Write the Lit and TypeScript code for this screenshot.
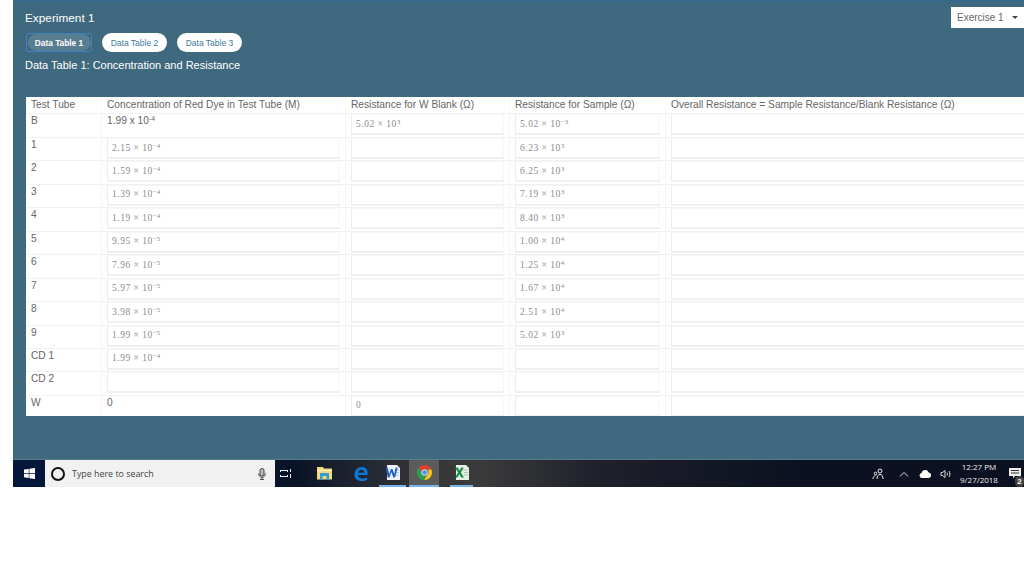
import { LitElement, html, css } from "lit";
import { customElement } from "lit/decorators.js";

type V = [string, string] | null;
const rows: { name: string; conc: V | string; blank: V | string; sample: V }[] = [
  { name: "B", conc: "b", blank: ["5.02", "3"], sample: ["5.02", "−3"] },
  { name: "1", conc: ["2.15", "−4"], blank: null, sample: ["6.23", "3"] },
  { name: "2", conc: ["1.59", "−4"], blank: null, sample: ["6.25", "3"] },
  { name: "3", conc: ["1.39", "−4"], blank: null, sample: ["7.19", "3"] },
  { name: "4", conc: ["1.19", "−4"], blank: null, sample: ["8.40", "3"] },
  { name: "5", conc: ["9.95", "−5"], blank: null, sample: ["1.00", "4"] },
  { name: "6", conc: ["7.96", "−5"], blank: null, sample: ["1.25", "4"] },
  { name: "7", conc: ["5.97", "−5"], blank: null, sample: ["1.67", "4"] },
  { name: "8", conc: ["3.98", "−5"], blank: null, sample: ["2.51", "4"] },
  { name: "9", conc: ["1.99", "−5"], blank: null, sample: ["5.02", "3"] },
  { name: "CD 1", conc: ["1.99", "−4"], blank: null, sample: null },
  { name: "CD 2", conc: null, blank: null, sample: null },
  { name: "W", conc: "w", blank: "0", sample: null },
];

@customElement("app-root")
export class AppRoot extends LitElement {
  static styles = css`
    :host { display: block; width: 1024px; height: 576px; background: #fff; overflow: hidden; font-family: "Liberation Sans", Arial, sans-serif; }
    .panel { margin-left: 13px; height: 460px; box-sizing: border-box; background: #3f697e; border-top: 2px solid #38698a; padding: 5px 0 0 12px; color: #fff; overflow: hidden; border-bottom: 1px solid #5d7d8d; }
    .head { display: flex; justify-content: space-between; align-items: center; height: 21px; }
    .title { font-size: 11.8px; }
    .ex { width: 73px; height: 21px; box-sizing: border-box; background: #fff; color: #666; font-size: 10px; display: flex; align-items: center; padding-left: 6px; gap: 8px; }
    .caret { width: 0; height: 0; border-style: solid; border-color: #444 transparent transparent; border-width: 3px 3.5px 0; }
    .pills { display: flex; margin: 5px 0 0 1px; height: 19px; }
    .pill { height: 19px; box-sizing: border-box; border-radius: 10px; background: #fff; color: #3d7a9c; font-size: 8.5px; display: flex; align-items: center; justify-content: center; width: 65px; margin-right: 10px; }
    .pill.on { width: 66px; border-radius: 2px; border: 1px solid #3f7fc4; background: #3f697e; }
    .pill.on span { display: flex; align-items: center; justify-content: center; width: 63px; height: 17px; border-radius: 9px; background: #587e90; color: #fff; font-weight: bold; font-size: 8.3px; }
    .sub { font-size: 11px; line-height: 14px; margin-top: 6px; }
    .wrap { margin: 25px 0 0 1px; height: 319px; overflow: hidden; background: #fff; box-sizing: border-box; }
    .grid { display: grid; width: 1000px; grid-template-columns: 76px 244px 164px 156px 360px; grid-template-rows: 16px 24px repeat(11, 23.45px) 24px; color: #666; font-size: 10.2px; }
    .th { padding: 1px 0 0 5px; line-height: 13px; white-space: nowrap; color: #666; border-right: 1px solid #f9f9f9; box-sizing: border-box; font-size: 10.2px; }
    .td { border-top: 1px solid #f1f1f1; border-right: 1px solid #f6f6f6; box-sizing: border-box; padding: 0 5px; line-height: 12px; min-width: 0; overflow: hidden; }
    .td.n { color: #666; padding-top: 1px; }
    .td.last { padding-right: 0; }
    .plain { color: #666; font-size: 10.2px; padding-top: 1px; }
    .plain sup { font-size: 7px; vertical-align: 3px; line-height: 0; }
    .input { height: 21px; box-sizing: border-box; border-top: 1px solid #f6f6f6; border-bottom: 2px solid #f0f0f0; border-left: 1px solid #ececec; border-right: 1px solid #f6f6f6; padding: 0 0 1px 4px; font-family: "Liberation Serif", serif; font-size: 9.5px; color: #8c8c8c; display: flex; align-items: center; letter-spacing: .5px; white-space: pre; }
    .input sup { font-size: 7px; vertical-align: 3px; line-height: 0; letter-spacing: 0; }
    .bar { margin-left: 13px; height: 27px; display: flex; align-items: stretch; background: linear-gradient(90deg, #0a1428 0%, #0a1428 28%, #333436 40%, #3b3b3b 46%, #1e202a 58%, #0b1120 78%, #0b1120 100%); color: #fff; }
    .start { width: 32px; background: #04163a; display: flex; align-items: center; justify-content: center; }
    .search { width: 230px; background: #f1f1f1; display: flex; align-items: center; padding-left: 6px; box-sizing: border-box; color: #444; font-family: "Open Sans", "Liberation Sans", sans-serif; font-size: 8.900px; }
    .ring { width: 10px; height: 10px; border: 2px solid #111; border-radius: 50%; margin-right: 7px; flex: none; }
    .txt { flex: 1; }
    .search svg { margin-right: 9px; }
    .cell { display: flex; align-items: center; justify-content: center; box-sizing: border-box; flex: none; }
    .act { border-bottom: 2px solid #75b4ea; }
    .chrome { background: #5b5b5b; margin-right: 11px; }
    .word { margin-right: 3px; }
    .tv { margin-right: 8px; }
    .gap5 { margin-right: 5px; }
    .w18 { width: 18px; } .w20 { width: 20px; } .w22 { width: 22px; } .w23 { width: 23px; } .w27 { width: 27px; } .w30 { width: 30px; } .w36 { width: 36px; } .w38 { width: 38px; }
    .spacer { flex: 1; }
    .clock { width: 42px; font-size: 8px; line-height: 13px; text-align: center; color: #eee; font-family: "Open Sans", "Liberation Sans", sans-serif; margin: 0 6px 0 2px; }
    .notif { position: relative; }
    .badge { position: absolute; right: 0; bottom: 0; width: 9px; height: 11px; border-radius: 5px; background: #444; color: #fff; font-size: 8px; font-weight: bold; line-height: 11px; text-align: center; }
  `;

  val(v: V | string) {
    if (v === null) return html`<div class="input"></div>`;
    if (typeof v === "string") return html`<div class="input">${v}</div>`;
    return html`<div class="input"><span>${v[0]} × 10<sup>${v[1]}</sup></span></div>`;
  }

  conc(v: V | string) {
    if (v === "b") return html`<div class="plain">1.99 x 10<sup>-4</sup></div>`;
    if (v === "w") return html`<div class="plain">0</div>`;
    return this.val(v);
  }

  render() {
    return html`
      <div class="panel">
        <div class="head">
          <div class="title">Experiment 1</div>
          <div class="ex">Exercise 1 <i class="caret"></i></div>
        </div>
        <div class="pills">
          <div class="pill on"><span>Data Table 1</span></div>
          <div class="pill">Data Table 2</div>
          <div class="pill">Data Table 3</div>
        </div>
        <div class="sub">Data Table 1: Concentration and Resistance</div>
        <div class="wrap">
          <div class="grid">
            <div class="th">Test Tube</div>
            <div class="th">Concentration of Red Dye in Test Tube (M)</div>
            <div class="th">Resistance for W Blank (Ω)</div>
            <div class="th">Resistance for Sample (Ω)</div>
            <div class="th">Overall Resistance = Sample Resistance/Blank Resistance (Ω)</div>
            ${rows.map(
              (r) => html`
                <div class="td n">${r.name}</div>
                <div class="td">${this.conc(r.conc)}</div>
                <div class="td">${this.val(r.blank)}</div>
                <div class="td">${this.val(r.sample)}</div>
                <div class="td last">${this.val(null)}</div>
              `
            )}
          </div>
        </div>
      </div>
      <div class="bar">
        <div class="start">
          <svg width="11" height="11" viewBox="0 0 11 11"><path fill="#fff" d="M0 1.600 4.800.900v4.200H0zM5.400.800 11 0v5.100H5.400zM0 5.800h4.800V10L0 9.300zM5.400 5.800H11V11l-5.600-.800z"/></svg>
        </div>
        <div class="search">
          <div class="ring"></div>
          <div class="txt">Type here to search</div>
          <svg width="8" height="12" viewBox="0 0 8 12"><rect x="2" y="0.500" width="4" height="7.500" rx="2" fill="#bbb" stroke="#444"/><path d="M.700 5.500C.700 8 2 9.200 4 9.200S7.300 8 7.300 5.500M4 9.200V11M2 11.400h4" fill="none" stroke="#444"/></svg>
        </div>
        <div class="cell w22 tv">
          <svg width="12" height="11" viewBox="0 0 12 11"><path d="M0 2h8v1H0zM0 8h8v1H0zM0 3h1v1H0zM7 3h1v1H7zM0 7h1v1H0zM7 7h1v1H7zM10 1h1v3h-1zM10 6h1v4h-1z" fill="#eee"/></svg>
        </div>
        <div class="cell w38">
          <svg width="15" height="13" viewBox="0 0 15 13"><path d="M0 0h6l1 1.500h8V12.500H0z" fill="#f6d77f"/><path d="M0 3.500h15" stroke="#fff3c4"/><path d="M3 6h9v7H9.500V9h-4v4H3z" fill="#2f9fd0"/></svg>
        </div>
        <div class="cell w36">
          <svg width="14" height="14" viewBox="0 0 14 14"><path d="M13.500 8H4c.200 2.300 2 3.500 4.500 3.500 1.700 0 3.200-.500 4.500-1.300v2.700c-1.400.700-3 1.100-5 1.100C3.200 14 .500 11.500.500 7.500.500 3 3.600 0 7.800 0c3.700 0 5.900 2.600 5.900 6.600zM10.300 5.800C10.300 3.900 9.300 2.700 7.500 2.700 5.700 2.700 4.400 3.900 4.100 5.800z" fill="#0a78d7"/></svg>
        </div>
        <div class="cell act w27 word">
          <svg width="15" height="15" viewBox="0 0 15 15"><path d="M2 0h10l3 3v12H2z" fill="#eef1f8"/><path d="M9 5h5M10 7.500h4M10 10h4" stroke="#b5c6e2"/><path d="M.500 2.500h2.200l1.500 6.500 1.700-5h1.600l1.700 5 1.500-6.500h2L10 12.500H8.300L6.400 7l-1.900 5.500H2.800z" fill="#1f5fc0"/></svg>
        </div>
        <div class="cell act chrome w30">
          <svg width="15" height="15" viewBox="0 0 16 16"><path d="M8 0a8 8 0 0 1 7.300 4.700H8a3.400 3.400 0 0 0-3.300 2.500L2 2.700A8 8 0 0 1 8 0z" fill="#e33b2e"/><path d="M15.300 4.700A8 8 0 0 1 7.600 16l3.300-5.800a3.400 3.400 0 0 0 .100-5.500z" fill="#f7c61a"/><path d="M7.600 16A8 8 0 0 1 2 2.700l3.300 6.900a3.400 3.400 0 0 0 5.600.600z" fill="#2aa24a"/><circle cx="8" cy="8" r="3" fill="#4f8df0" stroke="#fff" stroke-width=".900"/></svg>
        </div>
        <div class="cell act w23">
          <svg width="15" height="15" viewBox="0 0 15 15"><path d="M2 0h10l3 3v12H2z" fill="#e6f0e6"/><path d="M9 5h5M10 7.500h4M10 10h4" stroke="#a5cbb0"/><path d="M1 2.500h2.800l1.700 3 1.700-3h2.500L7 7.500l3 5H7.200l-1.900-3.200-1.800 3.200H1l3-5z" fill="#1f8a4a"/></svg>
        </div>
        <div class="spacer"></div>
        <div class="cell w22 gap5">
          <svg width="12" height="12" viewBox="0 0 12 12" fill="none" stroke="#eee"><circle cx="8" cy="3" r="2"/><path d="M5 11c0-3 1-4.500 3-4.500s3 1.500 3 4.500"/><circle cx="3.500" cy="5.500" r="1.300"/><path d="M1 11c0-2 1-3.200 2.500-3.200"/></svg>
        </div>
        <div class="cell w20">
          <svg width="10" height="6" viewBox="0 0 10 6" fill="none" stroke="#ddd"><path d="M1 5.500 5 1.500l4 4"/></svg>
        </div>
        <div class="cell w22">
          <svg width="13" height="8" viewBox="0 0 13 8"><path d="M3 8a2.600 2.600 0 0 1-.500-5.100A3.800 3.800 0 0 1 9.700 2.500 2.800 2.800 0 0 1 10 8z" fill="#fff"/></svg>
        </div>
        <div class="cell w20">
          <svg width="12" height="10" viewBox="0 0 12 10" fill="none" stroke="#ddd"><path d="M1 3.500h1.500L5 1.500v7L2.500 6.500H1z"/><path d="M7 3.500c.600 1 .600 2 0 3M9 2c1.200 2 1.200 4 0 6"/></svg>
        </div>
        <div class="clock">12:27 PM<br />9/27/2018</div>
        <div class="cell notif w18">
          <svg width="12" height="11" viewBox="0 0 12 11"><path d="M0 0h12v8H6L4 10.500V8H0z" fill="#eee"/><path d="M2 2.500h8M2 5h8" stroke="#333"/></svg>
          <span class="badge">2</span>
        </div>
      </div>
    `;
  }
}
